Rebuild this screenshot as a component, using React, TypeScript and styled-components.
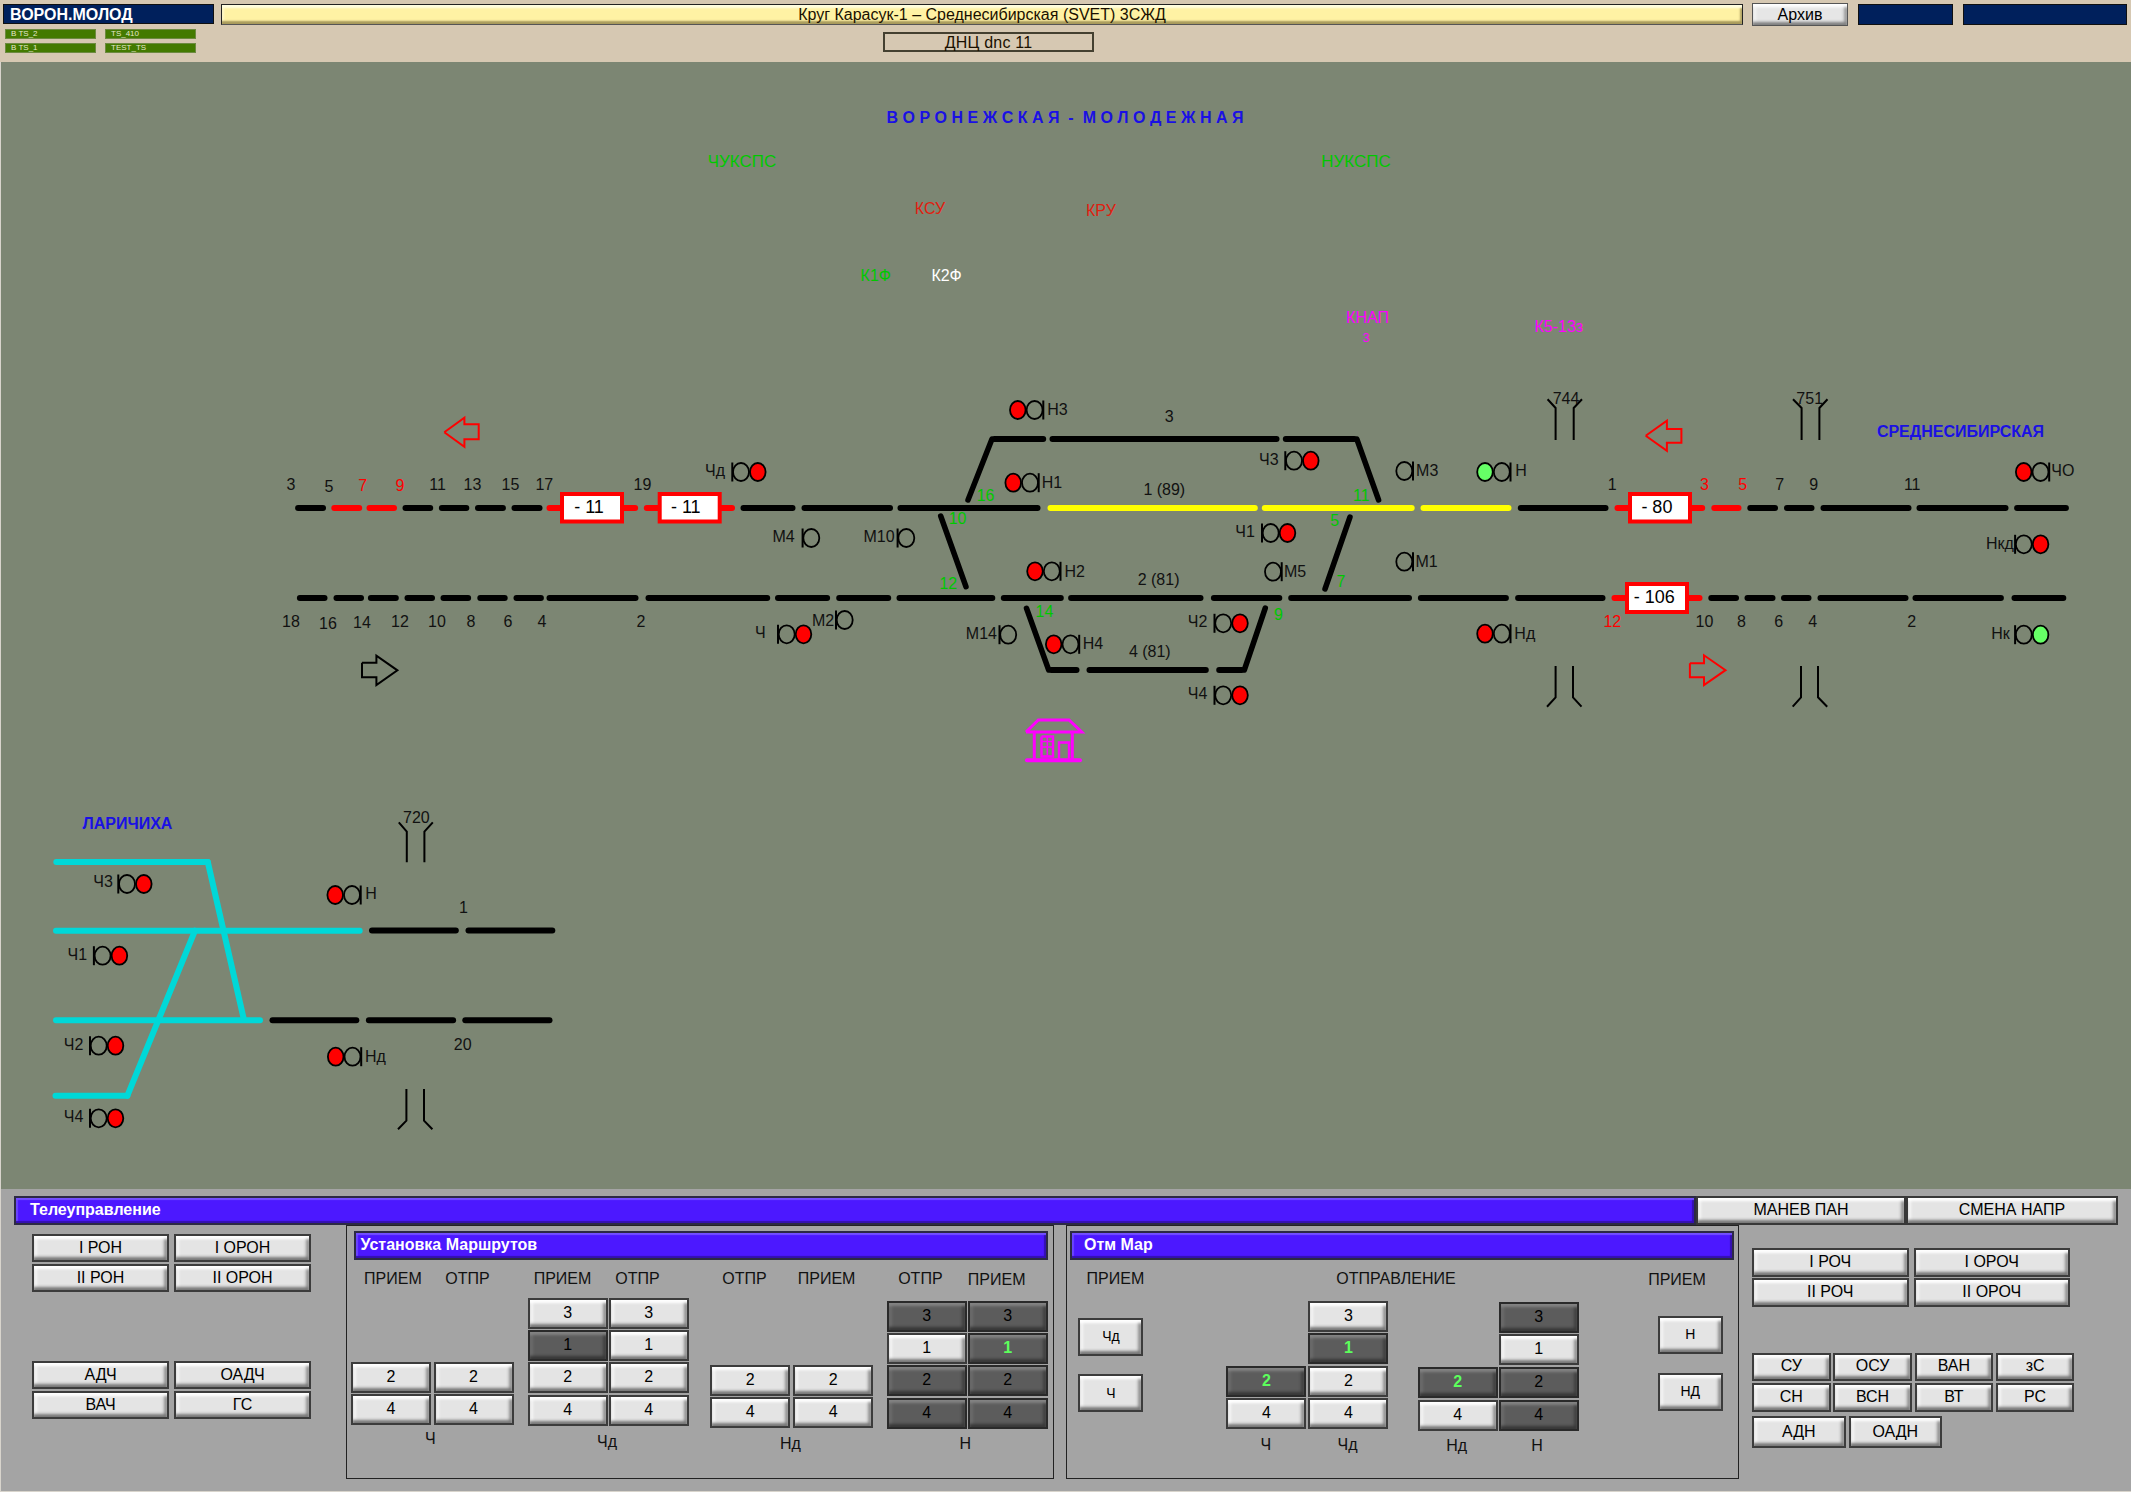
import React from "react";
import styled, { createGlobalStyle } from "styled-components";

const Global = createGlobalStyle`
  html, body { margin: 0; padding: 0; background: #d8d4cc; overflow: hidden; }
  * { box-sizing: border-box; }
  #root { font-family: "Liberation Sans", Arial, sans-serif; }
`;

const Page = styled.div`
  width: 2131px;
  height: 1492px;
  display: flex;
  flex-direction: column;
  background: #d8d4cc;
`;

/* ---------- header ---------- */
const Header = styled.header`
  height: 62px;
  padding-top: 4px;
  background: #d6c8b2;
  color: #000;
`;
const TopRow = styled.div`
  display: flex;
  align-items: flex-start;
  height: 20px;
  padding-left: 3px;
`;
const StationName = styled.div`
  width: 211px;
  height: 20px;
  padding-left: 6px;
  background: #00205c;
  border: 1px solid #101010;
  color: #fff;
  font-weight: 700;
  font-size: 16px;
  line-height: 19px;
`;
const NavyCell = styled.div<{ $w: number }>`
  width: ${(p) => p.$w}px;
  height: 21px;
  margin-left: 10px;
  background: #00205c;
  border: 1px solid #101010;
`;
const CircleTitle = styled.div`
  width: 1522px;
  height: 21px;
  margin-left: 7px;
  background: #fff2a4;
  border: 1px solid #222;
  border-bottom-color: #555;
  box-shadow: inset 0 4px 2px -1px #fffde0, inset 0 -4px 2px -1px #a89a5c,
    inset 3px 0 2px -1px #fff8c8, inset -3px 0 2px -1px #b0a060;
  text-align: center;
  font-size: 16px;
  line-height: 19px;
  color: #1a1000;
`;
const ArchiveButton = styled.div`
  width: 96px;
  height: 23px;
  margin: -1px 0 0 9px;
  background: #e6e6e6;
  border: 1px solid #555;
  box-shadow: inset 0 4px 3px -1px #fff, inset 0 -4px 3px -1px #808080,
    inset 4px 0 3px -1px #f4f4f4, inset -4px 0 3px -1px #999;
  text-align: center;
  font-size: 16px;
  line-height: 22px;
`;
const BottomRow = styled.div`
  display: flex;
  align-items: flex-start;
  padding-left: 5px;
`;
const BadgeGrid = styled.div`
  display: grid;
  grid-template-columns: 91px 91px;
  grid-auto-rows: 10px;
  column-gap: 9px;
  row-gap: 4px;
  margin-top: 5px;
`;
const Badge = styled.div`
  padding-left: 6px;
  background: #437a00;
  outline: 1px solid #6c8a40;
  outline-offset: -1px;
  color: #e4e8cc;
  font-size: 8px;
  line-height: 9px;
  white-space: nowrap;
`;
const DispatcherBox = styled.div`
  width: 211px;
  height: 20px;
  margin: 8px 0 0 687px;
  border: 2px solid #444030;
  text-align: center;
  font-size: 16px;
  letter-spacing: 0.2px;
  line-height: 17px;
  color: #1a1000;
`;

/* ---------- schematic ---------- */
const Canvas = styled.main`
  height: 1127px;
  margin-left: 1px;
  background: #7c8673;
`;
const Scheme = styled.svg`
  display: block;
  width: 2130px;
  height: 1127px;
  font-family: "Liberation Sans", Arial, sans-serif;
`;
const Line = styled.line<{ $c?: string; $w?: number }>`
  stroke: ${(p) => p.$c ?? "#000"};
  stroke-width: ${(p) => p.$w ?? 6}px;
  stroke-linecap: round;
`;
const Outline = styled.polyline<{ $c: string; $w?: number }>`
  fill: none;
  stroke: ${(p) => p.$c};
  stroke-width: ${(p) => p.$w ?? 2}px;
`;
const Caption = styled.text<{ $c?: string; $s?: number; $b?: boolean }>`
  fill: ${(p) => p.$c ?? "#111"};
  font-size: ${(p) => p.$s ?? 16}px;
  font-weight: ${(p) => (p.$b ? 700 : 400)};
  text-anchor: middle;
  dominant-baseline: central;
`;
const SchemeTitle = styled(Caption)`
  white-space: pre;
`;
const SpeedFrame = styled.rect`
  fill: #fff;
  stroke: #ff0000;
  stroke-width: 4px;
`;
const Lamp = styled.ellipse<{ $fill: string }>`
  fill: ${(p) => p.$fill};
  stroke: #000;
  stroke-width: 1.8px;
`;
const SignalBar = styled.line`
  stroke: #000;
  stroke-width: 2px;
`;

const RED = "#ff0000";
const YEL = "#ffff00";
const GRN = "#00c800";
const CYAN = "#00d8d8";
const BLUE = "#1a10e4";
const MAG = "#ff00ff";

type Seg = [number, number, number, string?];
const segs: Seg[] = [
  [295.6, 325.5, 508],
  [331.8, 361.7, 508, RED],
  [367, 396.5, 508, RED],
  [403, 432.7, 508],
  [439.4, 468.8, 508],
  [475.5, 505.4, 508],
  [512, 542, 508],
  [547, 637.6, 508, RED],
  [644.3, 734.5, 508, RED],
  [741, 795, 508],
  [802, 892.5, 508],
  [898, 1040, 508],
  [1048, 1257.3, 508, YEL],
  [1262.3, 1414.2, 508, YEL],
  [1421, 1511, 508, YEL],
  [1518.3, 1608, 508],
  [1615, 1704.7, 508, RED],
  [1711.8, 1741, 508, RED],
  [1747.8, 1777.5, 508],
  [1784.5, 1814, 508],
  [1821, 1911, 508],
  [1917, 2008, 508],
  [2014.6, 2068.4, 508],
  [297.4, 327, 598],
  [334, 363.5, 598],
  [368.4, 398.3, 598],
  [405, 434.5, 598],
  [441, 470.6, 598],
  [477.8, 507.2, 598],
  [514, 543.4, 598],
  [547, 638, 598],
  [646, 769.7, 598],
  [775.5, 829.6, 598],
  [836.7, 890.7, 598],
  [897, 994.8, 598],
  [1001.3, 1063.3, 598],
  [1068.6, 1203, 598],
  [1211.4, 1281.8, 598],
  [1288.7, 1411.5, 598],
  [1418.4, 1508.4, 598],
  [1515.6, 1605, 598],
  [1612, 1702, 598, RED],
  [1708.8, 1738.5, 598],
  [1745, 1775, 598],
  [1781.5, 1811, 598],
  [1818, 1908, 598],
  [1913, 2003.4, 598],
  [2012, 2065.8, 598],
  [992, 1045.7, 439],
  [1050, 1279, 439],
  [1283.3, 1356.8, 439],
  [1048.7, 1079, 670],
  [1087, 1208.3, 670],
  [1216.7, 1244.3, 670],
  [369.5, 458.3, 930.5],
  [466, 554.8, 930.5],
  [270, 358.8, 1020.3],
  [366.4, 455.6, 1020.3],
  [462.8, 552, 1020.3],
];

type Diag = [number, number, number, number, string?];
const diagonals: Diag[] = [
  [968, 500, 992, 439],
  [1356.8, 439, 1378.6, 500],
  [940.7, 516, 966, 586.7],
  [1350, 517, 1325, 589],
  [1026.5, 608.3, 1048.7, 670],
  [1244.3, 670, 1265.3, 608],
  [56.3, 862, 207.8, 862, CYAN],
  [207.8, 862, 244, 1020, CYAN],
  [56, 930.7, 359.7, 930.7, CYAN],
  [56, 1020.3, 260, 1020.3, CYAN],
  [55.5, 1095.7, 127.4, 1095.7, CYAN],
  [127.4, 1095.7, 195, 930.7, CYAN],
];

type Sig = { x: number; y: number; m: 1 | -1; lamp?: string; text: string; tx: number; ty: number };
const LIT = "#ff0000";
const GO = "#66ff66";
const signals: Sig[] = [
  { x: 741, y: 472, m: -1, lamp: LIT, text: "Чд", tx: 715, ty: 470 },
  { x: 811.3, y: 538, m: -1, text: "М4", tx: 783.6, ty: 536 },
  { x: 906.3, y: 538, m: -1, text: "М10", tx: 879, ty: 536 },
  { x: 786.7, y: 634.3, m: -1, lamp: LIT, text: "Ч", tx: 760.4, ty: 632.7 },
  { x: 844.7, y: 620, m: -1, text: "М2", tx: 823, ty: 620.7 },
  { x: 1034.6, y: 410, m: 1, lamp: LIT, text: "Н3", tx: 1057.5, ty: 409 },
  { x: 1030, y: 482.7, m: 1, lamp: LIT, text: "Н1", tx: 1052, ty: 482 },
  { x: 1294, y: 460.7, m: -1, lamp: LIT, text: "Ч3", tx: 1268.8, ty: 459 },
  { x: 1404.3, y: 471, m: 1, text: "М3", tx: 1427.2, ty: 470 },
  { x: 1501.8, y: 472, m: 1, lamp: GO, text: "Н", tx: 1521, ty: 470 },
  { x: 1270.7, y: 533, m: -1, lamp: LIT, text: "Ч1", tx: 1245, ty: 531 },
  { x: 1051.8, y: 571.3, m: 1, lamp: LIT, text: "Н2", tx: 1074.8, ty: 571 },
  { x: 1273, y: 571.7, m: 1, text: "М5", tx: 1295, ty: 571 },
  { x: 1404.3, y: 561.7, m: 1, text: "М1", tx: 1426.5, ty: 561 },
  { x: 1223.2, y: 623.3, m: -1, lamp: LIT, text: "Ч2", tx: 1197.6, ty: 621 },
  { x: 1008.2, y: 634.7, m: -1, text: "М14", tx: 981.4, ty: 633 },
  { x: 1070.5, y: 644.3, m: 1, lamp: LIT, text: "Н4", tx: 1093, ty: 643 },
  { x: 1501.8, y: 633.7, m: 1, lamp: LIT, text: "Нд", tx: 1524.8, ty: 633 },
  { x: 1223.2, y: 695.3, m: -1, lamp: LIT, text: "Ч4", tx: 1197.6, ty: 693 },
  { x: 2040.5, y: 472, m: 1, lamp: LIT, text: "ЧО", tx: 2062.8, ty: 470.7 },
  { x: 2023.8, y: 544.3, m: -1, lamp: LIT, text: "Нкд", tx: 2000, ty: 543 },
  { x: 2023.8, y: 634.7, m: -1, lamp: GO, text: "Нк", tx: 2000.5, ty: 633 },
  { x: 127, y: 884, m: -1, lamp: LIT, text: "Ч3", tx: 103, ty: 881.7 },
  { x: 102.6, y: 955.7, m: -1, lamp: LIT, text: "Ч1", tx: 77.3, ty: 954 },
  { x: 98.7, y: 1045.7, m: -1, lamp: LIT, text: "Ч2", tx: 73.5, ty: 1044 },
  { x: 98.7, y: 1118.3, m: -1, lamp: LIT, text: "Ч4", tx: 73.5, ty: 1116 },
  { x: 352, y: 895, m: 1, lamp: LIT, text: "Н", tx: 371, ty: 893 },
  { x: 352.5, y: 1056.7, m: 1, lamp: LIT, text: "Нд", tx: 375.4, ty: 1056.7 },
];

type Lab = [string, number, number, string?, number?, boolean?];
const labels: Lab[] = [
  ["3", 291, 484.3], ["5", 329, 486], ["7", 362.6, 485, RED], ["9", 400, 485, RED],
  ["11", 437.6, 484.3], ["13", 472.4, 484.3], ["15", 510.4, 484.3], ["17", 544.3, 484.3],
  ["19", 642.5, 484.3],
  ["18", 291, 621], ["16", 328, 623.3], ["14", 362, 622.3], ["12", 400, 621],
  ["10", 437, 621], ["8", 471, 621], ["6", 508, 621], ["4", 542, 621], ["2", 641, 621],
  ["3", 1169.3, 416], ["1 (89)", 1164.3, 489.7], ["2 (81)", 1158.6, 579.3], ["4 (81)", 1149.8, 651.7],
  ["1", 1612.3, 484.3], ["3", 1704.4, 484.3, RED], ["5", 1742.6, 484.3, RED],
  ["7", 1779.7, 484.3], ["9", 1813.8, 484.3], ["11", 1912.2, 484.3],
  ["12", 1612.3, 621, RED], ["10", 1704.4, 621], ["8", 1741.5, 621], ["6", 1778.6, 621],
  ["4", 1812.7, 621], ["2", 1911.8, 621],
  ["16", 985.6, 495, GRN], ["10", 957.6, 518, GRN], ["11", 1361.4, 495, GRN], ["5", 1334.6, 520, GRN],
  ["7", 1341, 581.7, GRN], ["14", 1044.5, 611, GRN], ["9", 1278.4, 614, GRN], ["12", 948.3, 583, GRN],
  ["ЧУКСПС", 742, 161.5, GRN, 17], ["НУКСПС", 1356, 161.5, GRN, 17],
  ["КСУ", 930, 208.5, "#e02010"], ["КРУ", 1100.9, 210.5, "#e02010"],
  ["К1Ф", 875.8, 275, GRN], ["К2Ф", 946.6, 275, "#fff"],
  ["КНАП", 1367.5, 317.5, MAG], ["3", 1366, 337, MAG, 13], ["К5-13з", 1558.8, 326.5, MAG],
  ["СРЕДНЕСИБИРСКАЯ", 1960.5, 431, BLUE, 16, true],
  ["ЛАРИЧИХА", 127.4, 823, BLUE, 16, true],
  ["744", 1566, 398], ["751", 1809.7, 398], ["720", 416.4, 817],
  ["1", 463.5, 907], ["20", 462.7, 1044],
];

const speedBoxes: [number, number, number, number, string, number][] = [
  [562, 494, 60, 27.5, "- 11", 589],
  [659.7, 494, 60, 27.5, "- 11", 685.8],
  [1630, 494, 60, 27.5, "- 80", 1656.9],
  [1627, 584, 60, 28, "- 106", 1654.3],
];

const arrow = (l: number, m: number, r: number, t: number, s1: number, s2: number, b: number, dir: 1 | -1) => {
  const c = (t + b) / 2;
  return dir === -1
    ? `${l},${c} ${m},${t} ${m},${s1} ${r},${s1} ${r},${s2} ${m},${s2} ${m},${b} ${l},${c}`
    : `${l},${s1} ${m},${s1} ${m},${t} ${r},${c} ${m},${b} ${m},${s2} ${l},${s2} ${l},${s1}`;
};
const arrows: [string, string][] = [
  [arrow(444.3, 464.4, 478.7, 417.7, 424.3, 439.3, 446.7, -1), RED],
  [arrow(362, 376.4, 397.4, 655.7, 662.7, 677.3, 685, 1), "#000"],
  [arrow(1645.7, 1666.9, 1681.4, 420.7, 429, 442.7, 450.7, -1), RED],
  [arrow(1689.9, 1704, 1725.5, 655.3, 663.3, 677.3, 685, 1), RED],
];

/* [left x, right x, top of posts, end of posts, flare tip] */
const gates: [number, number, number, number, number, number, number][] = [
  [1555.6, 1573.7, 408, 440, 399.3, 1547.6, 1582],
  [1801.6, 1819.4, 408, 440, 399.3, 1793, 1827.5],
  [1555.6, 1573, 697.3, 666, 706.7, 1547, 1581.5],
  [1801, 1818, 697.3, 666, 706.7, 1792.7, 1827.2],
  [406.8, 424.4, 831.7, 862.3, 822.3, 398.8, 432.8],
  [406.4, 424, 1120.7, 1089, 1129.3, 398, 432.4],
];

const Signal = ({ s }: { s: Sig }) => (
  <g>
    <Lamp $fill="none" cx={s.x} cy={s.y} rx={8} ry={9} />
    <SignalBar x1={s.x + s.m * 8.7} x2={s.x + s.m * 8.7} y1={s.y - 9.5} y2={s.y + 9.5} />
    {s.lamp && <Lamp $fill={s.lamp} cx={s.x - s.m * 16.8} cy={s.y} rx={7.8} ry={9} />}
    <Caption x={s.tx} y={s.ty}>{s.text}</Caption>
  </g>
);

const StationIcon = () => (
  <g>
    <Outline $c={MAG} $w={3} points="1026,732 1038.3,720 1069,720 1081.7,732 1026,732" />
    <Line $c={MAG} $w={3} x1={1034.3} y1={732} x2={1034.3} y2={760} />
    <Line $c={MAG} $w={3} x1={1072.3} y1={732} x2={1072.3} y2={760} />
    <Line $c={MAG} $w={4} x1={1027} y1={760.3} x2={1080} y2={760.3} />
    <Outline $c={MAG} $w={2.4} points="1041.5,736.5 1053,736.5 1053,756.5 1041.5,756.5 1041.5,736.5" />
    <Line $c={MAG} $w={1.6} x1={1047.3} y1={737} x2={1047.3} y2={756} />
    <Line $c={MAG} $w={1.6} x1={1042} y1={741.5} x2={1053} y2={741.5} />
    <Line $c={MAG} $w={1.6} x1={1042} y1={747} x2={1053} y2={747} />
    <Outline $c={MAG} $w={2.4} points="1059,760 1059,742.5 1069,742.5 1069,760" />
  </g>
);

const Schematic = () => (
  <Scheme viewBox="1 62 2130 1127" role="img">
    <SchemeTitle x={1065} y={117.3} $c={BLUE} $b textLength={357} lengthAdjust="spacing">
      {"В О Р О Н Е Ж С К А Я  -  М О Л О Д Е Ж Н А Я"}
    </SchemeTitle>
    {diagonals.map((d, i) => (
      <Line key={i} $c={d[4]} $w={d[4] ? 6 : 5.5} x1={d[0]} y1={d[1]} x2={d[2]} y2={d[3]} />
    ))}
    {segs.map((s, i) => (
      <Line key={i} $c={s[3]} x1={s[0] + 2.5} x2={s[1] - 2.5} y1={s[2]} y2={s[2]} />
    ))}
    {speedBoxes.map((b, i) => (
      <g key={i}>
        <SpeedFrame x={b[0]} y={b[1]} width={b[2]} height={b[3]} />
        <Caption x={b[5]} y={b[1] + 13} $s={18} $c="#000">{b[4]}</Caption>
      </g>
    ))}
    {arrows.map((a, i) => (
      <Outline key={i} points={a[0]} $c={a[1]} />
    ))}
    {gates.map((g, i) => (
      <g key={i}>
        <Outline $c="#000" points={`${g[5]},${g[4]} ${g[0]},${g[2]} ${g[0]},${g[3]}`} />
        <Outline $c="#000" points={`${g[6]},${g[4]} ${g[1]},${g[2]} ${g[1]},${g[3]}`} />
      </g>
    ))}
    {signals.map((s, i) => (
      <Signal key={i} s={s} />
    ))}
    {labels.map((l, i) => (
      <Caption key={i} x={l[1]} y={l[2]} $c={l[3]} $s={l[4]} $b={l[5]}>{l[0]}</Caption>
    ))}
    <StationIcon />
  </Scheme>
);

/* ---------- control panel ---------- */
const Panel = styled.section`
  flex: 1;
  margin: 0 0 1px 1px;
  padding: 7px 13px 0 13px;
  background: #a4a4a4;
`;
const lightBevel =
  "inset 0 4px 3px -1px #fff, inset 0 -4px 3px -1px #787878, inset 4px 0 3px -1px #f6f6f6, inset -4px 0 3px -1px #909090";
const darkBevel =
  "inset 0 4px 3px -1px #848484, inset 0 -4px 3px -1px #383838, inset 4px 0 3px -1px #6c6c6c, inset -4px 0 3px -1px #404040";
const blueBevel = `
  background: #4c18ff;
  border: 2px solid #2c2a44;
  box-shadow: inset 0 3px 1px -1px #7450ff, inset 0 -3px 1px -1px #3410b0,
    inset 3px 0 1px -1px #6a44ff, inset -3px 0 1px -1px #3410b0;
  color: #fff;
  font-weight: 700;
  font-size: 16px;
  white-space: nowrap;
`;
const TitleRow = styled.div`
  display: flex;
  height: 28.5px;
`;
const MainBar = styled.div`
  ${blueBevel}
  flex: 1;
  padding-left: 14px;
  line-height: 23px;
`;
const TabButton = styled.div<{ $w: number }>`
  width: ${(p) => p.$w}px;
  background: #e4e4e4;
  border: 2px solid #383838;
  box-shadow: ${lightBevel};
  text-align: center;
  font-size: 16px;
  line-height: 23px;
  color: #000;
`;
const Body = styled.div`
  display: flex;
  align-items: flex-start;
`;
const SideColumn = styled.div<{ $ml: number; $mt: number; $w: number }>`
  flex: none;
  width: ${(p) => p.$w}px;
  margin: ${(p) => p.$mt}px 0 0 ${(p) => p.$ml}px;
`;
const KeyGrid = styled.div<{ $cols: string; $gap: number; $rowGap: number; $mt?: number; $h?: number }>`
  display: grid;
  grid-template-columns: ${(p) => p.$cols};
  grid-auto-rows: ${(p) => p.$h ?? 28}px;
  column-gap: ${(p) => p.$gap}px;
  row-gap: ${(p) => p.$rowGap}px;
  margin-top: ${(p) => p.$mt ?? 0}px;
`;
const Key = styled.div<{ $on?: boolean; $green?: boolean; $small?: boolean }>`
  display: flex;
  align-items: center;
  justify-content: center;
  padding-bottom: 1px;
  background: ${(p) => (p.$on ? "#5c5c5c" : "#e4e4e4")};
  border: 2px solid ${(p) => (p.$on ? "#2a2a2a" : "#3c3c3c")};
  box-shadow: ${(p) => (p.$on ? darkBevel : lightBevel)};
  color: ${(p) => (p.$green ? "#5cff5c" : "#000")};
  font-size: ${(p) => (p.$small ? 14 : 16)}px;
  font-weight: ${(p) => (p.$green ? 700 : 400)};
  white-space: nowrap;
`;
const Slot = styled.div``;
const Box = styled.div<{ $ml: number; $w: number }>`
  flex: none;
  width: ${(p) => p.$w}px;
  height: 254px;
  margin-left: ${(p) => p.$ml}px;
  border: 1px solid #222;
`;
const BoxBar = styled.div<{ $ml: number; $mr: number; $pl: number }>`
  ${blueBevel}
  height: 29px;
  margin: 5.5px ${(p) => p.$mr}px 0 ${(p) => p.$ml}px;
  padding-left: ${(p) => p.$pl}px;
  line-height: 23px;
`;
const LabelRow = styled.div<{ $mt: number }>`
  display: flex;
  align-items: flex-start;
  height: 20px;
  margin-top: ${(p) => p.$mt}px;
`;
const HeadCell = styled.div<{ $ml: number; $w: number; $mt?: number }>`
  flex: none;
  width: ${(p) => p.$w}px;
  margin: ${(p) => p.$mt ?? 0}px 0 0 ${(p) => p.$ml}px;
  text-align: center;
  font-size: 16px;
  line-height: 20px;
  color: #111;
`;
const RouteRow = styled.div<{ $mt: number; $h: number }>`
  display: flex;
  align-items: flex-start;
  height: ${(p) => p.$h}px;
  margin-top: ${(p) => p.$mt}px;
`;
const RouteGroup = styled.div<{ $ml: number; $mt: number; $gap: number; $rowGap?: number }>`
  flex: none;
  display: grid;
  grid-template-columns: 80px 80px;
  grid-auto-rows: 31px;
  column-gap: ${(p) => p.$gap}px;
  row-gap: ${(p) => p.$rowGap ?? 1.4}px;
  margin: ${(p) => p.$mt}px 0 0 ${(p) => p.$ml}px;
`;
const SingleColumn = styled.div<{ $ml: number; $mt: number; $gap: number }>`
  flex: none;
  display: flex;
  flex-direction: column;
  gap: ${(p) => p.$gap}px;
  width: 65px;
  margin: ${(p) => p.$mt}px 0 0 ${(p) => p.$ml}px;
  & > div { height: 38px; }
`;

const spaced = (items: [string, number, number?][], origin: number, w: number) => {
  let edge = origin;
  return items.map(([text, c, mt]) => {
    const left = c - w / 2;
    const ml = left - edge;
    edge = left + w;
    return { text, ml, mt };
  });
};

const Labels = ({ items, origin, w, mt }: { items: [string, number, number?][]; origin: number; w: number; mt: number }) => (
  <LabelRow $mt={mt}>
    {spaced(items, origin, w).map((c, i) => (
      <HeadCell key={i} $ml={c.ml} $w={w} $mt={c.mt}>{c.text}</HeadCell>
    ))}
  </LabelRow>
);

type K = string | null | { t: string; on?: boolean; green?: boolean };
const Keys = ({ rows }: { rows: K[] }) => (
  <>
    {rows.map((k, i) => {
      if (k === null) return <Slot key={i} />;
      if (typeof k === "string") return <Key key={i}>{k}</Key>;
      return <Key key={i} $on={k.on} $green={k.green}>{k.t}</Key>;
    })}
  </>
);

const on = (t: string) => ({ t, on: true });
const lit = (t: string) => ({ t, on: true, green: true });

const ControlPanel = () => (
  <Panel>
    <TitleRow>
      <MainBar>Телеуправление</MainBar>
      <TabButton $w={210}>МАНЕВ ПАН</TabButton>
      <TabButton $w={212}>СМЕНА НАПР</TabButton>
    </TitleRow>
    <Body>
      <SideColumn $ml={18} $mt={9.5} $w={279}>
        <KeyGrid $cols="137px 137px" $gap={5} $rowGap={2}>
          <Key>I РОН</Key><Key>I ОРОН</Key>
          <Key>II РОН</Key><Key>II ОРОН</Key>
        </KeyGrid>
        <KeyGrid $cols="137px 137px" $gap={5} $rowGap={2} $mt={69}>
          <Key>АДЧ</Key><Key>ОАДЧ</Key>
          <Key>ВАЧ</Key><Key>ГС</Key>
        </KeyGrid>
      </SideColumn>

      <Box $ml={35} $w={708}>
        <BoxBar $ml={6.5} $mr={5} $pl={5}>Установка Маршрутов</BoxBar>
        <Labels
          origin={347}
          w={70}
          mt={8.5}
          items={[["ПРИЕМ", 392.9], ["ОТПР", 467.4], ["ПРИЕМ", 562.5], ["ОТПР", 637.5], ["ОТПР", 744.5], ["ПРИЕМ", 826.6], ["ОТПР", 920.4], ["ПРИЕМ", 996.7, 1]]}
        />
        <RouteRow $mt={9} $h={131}>
          <RouteGroup $ml={4} $mt={64} $gap={2.5}>
            <Keys rows={["2", "2", "4", "4"]} />
          </RouteGroup>
          <RouteGroup $ml={14.2} $mt={0} $gap={1}>
            <Keys rows={["3", "3", on("1"), "1", "2", "2", "4", "4"]} />
          </RouteGroup>
          <RouteGroup $ml={21.5} $mt={67} $gap={3}>
            <Keys rows={["2", "2", "4", "4"]} />
          </RouteGroup>
          <RouteGroup $ml={13.4} $mt={3} $gap={1}>
            <Keys rows={[on("3"), on("3"), "1", lit("1"), on("2"), on("2"), on("4"), on("4")]} />
          </RouteGroup>
        </RouteRow>
        <Labels
          origin={347}
          w={60}
          mt={0}
          items={[["Ч", 430.4, 0], ["Чд", 607, 3], ["Нд", 790.4, 5], ["Н", 965.4, 5]]}
        />
      </Box>

      <Box $ml={12} $w={673}>
        <BoxBar $ml={3} $mr={4} $pl={12}>Отм Мар</BoxBar>
        <Labels
          origin={1067}
          w={130}
          mt={8.5}
          items={[["ПРИЕМ", 1115.4], ["ОТПРАВЛЕНИЕ", 1396], ["ПРИЕМ", 1677, 1]]}
        />
        <RouteRow $mt={12} $h={130}>
          <SingleColumn $ml={11.4} $mt={17} $gap={18.7}>
            <Key $small>Чд</Key>
            <Key $small>Ч</Key>
          </SingleColumn>
          <RouteGroup $ml={83} $mt={0} $gap={2} $rowGap={1.6}>
            <Keys rows={[null, "3", null, lit("1"), lit("2"), "2", "4", "4"]} />
          </RouteGroup>
          <RouteGroup $ml={29.4} $mt={1.4} $gap={1} $rowGap={1.6}>
            <Keys rows={[null, on("3"), null, "1", lit("2"), on("2"), "4", on("4")]} />
          </RouteGroup>
          <SingleColumn $ml={79} $mt={15} $gap={19.3}>
            <Key $small>Н</Key>
            <Key $small>НД</Key>
          </SingleColumn>
        </RouteRow>
        <Labels
          origin={1067}
          w={60}
          mt={1}
          items={[["Ч", 1265.9, 3], ["Чд", 1347.6, 3], ["Нд", 1456.6, 4], ["Н", 1537, 4]]}
        />
      </Box>

      <SideColumn $ml={13} $mt={23.5} $w={330}>
        <KeyGrid $cols="156.5px 156.5px" $gap={5} $rowGap={1.5} $h={28.5}>
          <Key>I РОЧ</Key><Key>I ОРОЧ</Key>
          <Key>II РОЧ</Key><Key>II ОРОЧ</Key>
        </KeyGrid>
        <KeyGrid $cols="78.5px 78.5px 78.5px 78.5px" $gap={2.8} $rowGap={2} $mt={46} $h={28.5}>
          <Key>СУ</Key><Key>ОСУ</Key><Key>ВАН</Key><Key>зС</Key>
          <Key>СН</Key><Key>ВСН</Key><Key>ВТ</Key><Key>РС</Key>
        </KeyGrid>
        <KeyGrid $cols="93.5px 93.5px" $gap={3} $rowGap={0} $mt={4.3} $h={32.7}>
          <Key>АДН</Key><Key>ОАДН</Key>
        </KeyGrid>
      </SideColumn>
    </Body>
  </Panel>
);

export default function App() {
  return (
    <Page>
      <Global />
      <Header>
        <TopRow>
          <StationName>ВОРОН.МОЛОД</StationName>
          <CircleTitle>Круг Карасук-1 – Среднесибирская (SVET) 3СЖД</CircleTitle>
          <ArchiveButton>Архив</ArchiveButton>
          <NavyCell $w={95} />
          <NavyCell $w={164} />
        </TopRow>
        <BottomRow>
          <BadgeGrid>
            <Badge>B TS_2</Badge>
            <Badge>TS_410</Badge>
            <Badge>B TS_1</Badge>
            <Badge>TEST_TS</Badge>
          </BadgeGrid>
          <DispatcherBox>ДНЦ dnc 11</DispatcherBox>
        </BottomRow>
      </Header>
      <Canvas>
        <Schematic />
      </Canvas>
      <ControlPanel />
    </Page>
  );
}
